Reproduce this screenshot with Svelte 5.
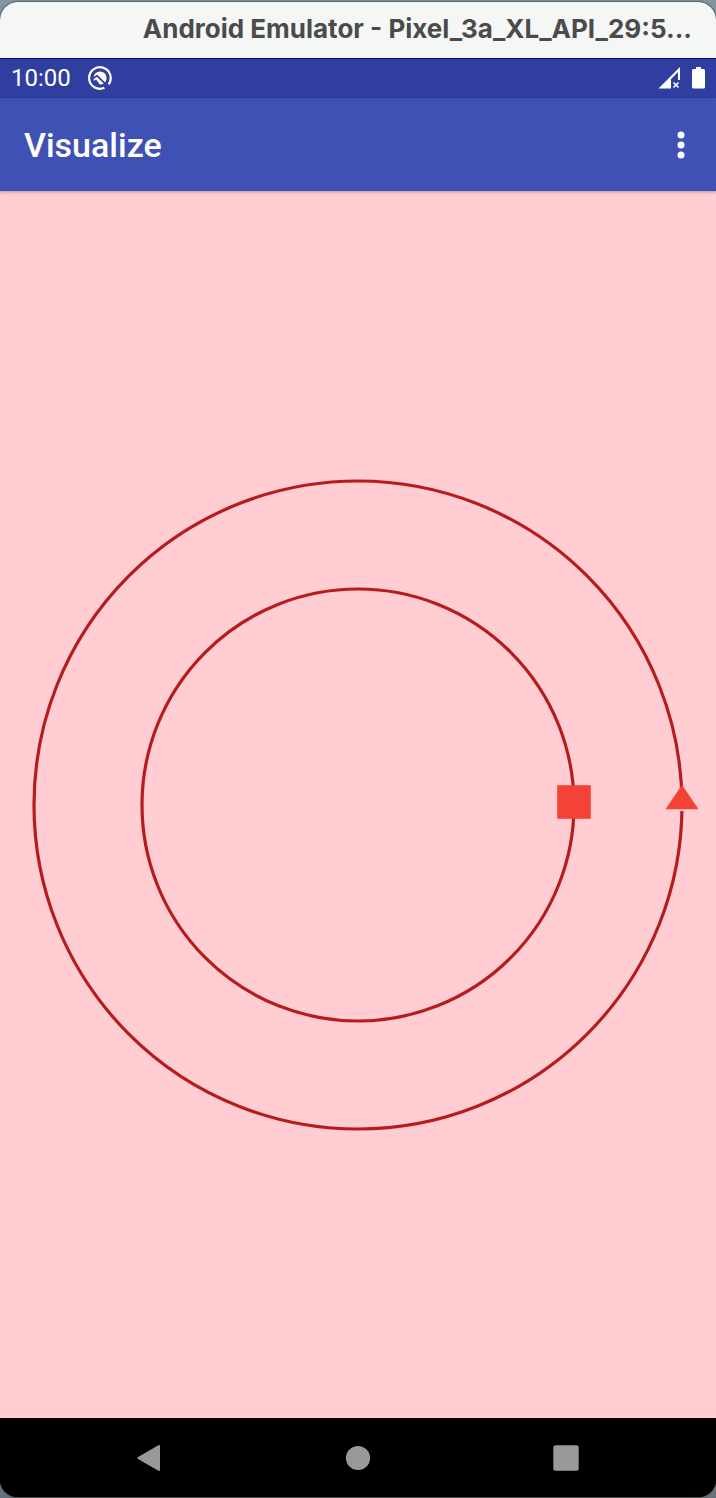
<script>
  const title = 'Android Emulator - Pixel_3a_XL_API_29:5...';
  const radii = [324, 216];
</script>

<div class="desktop">
  <div class="window">
    <header class="titlebar">{title}</header>

    <div class="statusbar">
      <span class="clock">10:00</span>
      <svg class="debug" width="24" height="24" viewBox="0 0 24 24" aria-hidden="true">
        <path d="M16.4 21.8A10.8 10.8 0 1 1 20.6 18.4" fill="none" stroke="#fff" stroke-width="2.2" />
        <circle cx="12" cy="12" r="6.6" fill="#fff" />
        <path d="M4.6 12.6L9.2 9.8L18.6 19.2" fill="none" stroke="#303f9f" stroke-width="1.7" />
        <path d="M4 16L8.2 13.4L12.4 19.8H6Z" fill="#303f9f" />
      </svg>
      <span class="spacer"></span>
      <svg width="22" height="22" viewBox="0 0 22 22" aria-hidden="true">
        <path d="M0.5 21.5L22 0V13H20V5L13 12V21.5Z" fill="#fff" />
        <path d="M15.5 15.5L20.5 20.5M20.5 15.5L15.5 20.5" stroke="#fff" stroke-width="1.6" />
      </svg>
      <svg width="13" height="22" viewBox="0 0 13 22" aria-hidden="true">
        <path d="M4 0H9V2H11.5Q13 2 13 3.5V20Q13 21.5 11.5 21.5H1.5Q0 21.5 0 20V3.5Q0 2 1.5 2H4Z" fill="#fff" />
      </svg>
    </div>

    <div class="appbar">
      <h1>Visualize</h1>
      <button aria-label="More options">
        <svg width="8" height="28" viewBox="0 0 8 28" aria-hidden="true">
          <circle cx="4" cy="4" r="3.5" fill="#fff" />
          <circle cx="4" cy="14" r="3.5" fill="#fff" />
          <circle cx="4" cy="24" r="3.5" fill="#fff" />
        </svg>
      </button>
    </div>

    <main>
      <svg class="orbits" viewBox="0 0 716 716" aria-hidden="true">
        {#each radii as r}
          <circle cx="358" cy="358" {r} fill="none" stroke="#b71c1c" stroke-width="3.2" />
        {/each}
        <rect x="678" y="358" width="8" height="6" fill="#ffcdd2" />
        <rect x="557.2" y="338.2" width="33.6" height="33.6" fill="#f44336" />
        <path d="M682 337.7L698.5 362.2H665.5Z" fill="#f44336" />
      </svg>
    </main>

    <nav>
      <button aria-label="Back">
        <svg width="26" height="28" viewBox="0 0 26 28" aria-hidden="true">
          <path d="M1 13L21 1.5Q23 0.5 23 2V26Q23 27.5 21 26.5L1 15Q-0.4 14 1 13Z" fill="#999" />
        </svg>
      </button>
      <button aria-label="Home">
        <svg width="26" height="26" viewBox="0 0 26 26" aria-hidden="true">
          <circle cx="13" cy="13" r="12.1" fill="#999" />
        </svg>
      </button>
      <button aria-label="Recent apps">
        <svg width="26" height="26" viewBox="0 0 26 26" aria-hidden="true">
          <rect x="0.3" y="0.3" width="25.4" height="25.4" rx="2.5" fill="#999" />
        </svg>
      </button>
    </nav>
  </div>
</div>

<style>
  .desktop {
    box-sizing: border-box;
    display: flex;
    min-height: 100vh;
    padding: 2px 0 1px;
    background: linear-gradient(#8295a3, #66727a);
    font-family: Roboto, sans-serif;
  }

  .window {
    display: flex;
    flex: 1;
    flex-direction: column;
    min-width: 0;
    overflow: hidden;
    border-radius: 18px;
    background: #000;
    box-shadow: 0 0 1px 1px rgba(0, 0, 0, 0.35);
  }

  .titlebar {
    box-sizing: border-box;
    height: 56px;
    padding: 0 24px;
    overflow: hidden;
    background: #f5f7f6;
    color: #4b4b4b;
    font: 700 26px/54px Inter, sans-serif;
    text-align: right;
    white-space: nowrap;
  }

  .statusbar {
    display: flex;
    align-items: center;
    height: 40px;
    padding: 0 11px;
    gap: 12px;
    background: #303f9f;
    box-shadow: inset 0 1px #001482;
    color: #fff;
  }

  .clock {
    font-size: 24px;
    line-height: 40px;
  }

  .debug {
    margin-left: 5px;
    overflow: visible;
  }

  .spacer {
    flex: 1;
  }

  .appbar {
    position: relative;
    display: flex;
    align-items: center;
    justify-content: space-between;
    height: 93px;
    padding: 0 19px 0 24px;
    background: #3f51b5;
    box-shadow: 0 1px 3px rgba(0, 0, 0, 0.3);
    color: #fff;
  }

  h1 {
    margin: 0;
    font-size: 34px;
    font-weight: 500;
    line-height: 44px;
  }

  button {
    display: flex;
    align-items: center;
    justify-content: center;
    padding: 0;
    border: 0;
    background: none;
    cursor: pointer;
  }

  .appbar button {
    width: 32px;
    height: 48px;
  }

  main {
    display: flex;
    flex: 1;
    align-items: center;
    background: #ffcdd2;
  }

  .orbits {
    display: block;
    width: 100%;
  }

  nav {
    display: grid;
    grid-template-columns: repeat(3, 1fr);
    height: 79px;
    padding: 0 46px;
    background: #000;
  }
</style>
